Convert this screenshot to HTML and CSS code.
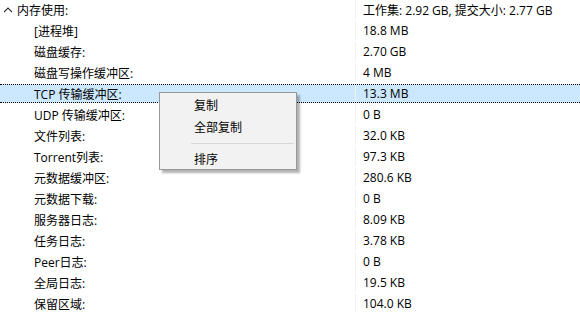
FILE: index.html
```html
<!DOCTYPE html>
<html lang="zh-CN">
<head>
    <meta charset="UTF-8">
    <title>内存使用</title>
    <link rel="stylesheet" href="styles.css">
</head>
<body>

<div class="stats-list">
    <div class="row group-row">
        <div class="name">
            <svg class="chevron" width="10" height="8" viewBox="0 0 10 8"><path d="M1 6 L5 2 L9 6" fill="none" stroke="#333" stroke-width="1.1"/></svg>
            内存使用:
        </div>
        <div class="value">工作集: 2.92 GB, 提交大小: 2.77 GB</div>
    </div>
    <div class="row"><div class="name child">[进程堆]</div><div class="value">18.8 MB</div></div>
    <div class="row"><div class="name child">磁盘缓存:</div><div class="value">2.70 GB</div></div>
    <div class="row"><div class="name child">磁盘写操作缓冲区:</div><div class="value">4 MB</div></div>
    <div class="row selected"><div class="name child">TCP 传输缓冲区:</div><div class="value">13.3 MB</div></div>
    <div class="row"><div class="name child">UDP 传输缓冲区:</div><div class="value">0 B</div></div>
    <div class="row"><div class="name child">文件列表:</div><div class="value">32.0 KB</div></div>
    <div class="row"><div class="name child">Torrent列表:</div><div class="value">97.3 KB</div></div>
    <div class="row"><div class="name child">元数据缓冲区:</div><div class="value">280.6 KB</div></div>
    <div class="row"><div class="name child">元数据下载:</div><div class="value">0 B</div></div>
    <div class="row"><div class="name child">服务器日志:</div><div class="value">8.09 KB</div></div>
    <div class="row"><div class="name child">任务日志:</div><div class="value">3.78 KB</div></div>
    <div class="row"><div class="name child">Peer日志:</div><div class="value">0 B</div></div>
    <div class="row"><div class="name child">全局日志:</div><div class="value">19.5 KB</div></div>
    <div class="row"><div class="name child">保留区域:</div><div class="value">104.0 KB</div></div>
</div>

<div class="context-menu">
    <div class="menu-item">复制</div>
    <div class="menu-item">全部复制</div>
    <div class="menu-sep"></div>
    <div class="menu-item">排序</div>
</div>

</body>
</html>
```

FILE: styles.css
```css
body {
    margin: 0;
    padding: 0;
    background: #fff;
    color: #000;
    font-family: "Open Sans", "Noto Sans CJK SC", sans-serif;
    font-size: 12px;
    width: 580px;
    height: 312px;
    overflow: hidden;
    position: relative;
}
.stats-list {
    display: flex;
    flex-direction: column;
    gap: 2px;
}
.row {
    display: flex;
    height: 19px;
    align-items: center;
    box-sizing: border-box;
}
.row.selected {
    background: #cce8ff;
    border-top: 1px dotted #000;
    border-bottom: 1px dotted #000;
}
.name {
    width: 356px;
    flex: none;
    display: flex;
    align-items: center;
    white-space: nowrap;
    border-right: 1px solid #f0f0f0;
    height: 100%;
    box-sizing: border-box;
}
.group-row .name {
    padding-left: 3px;
}
.chevron {
    margin-right: 4px;
}
.name.child {
    padding-left: 34px;
}
.value {
    padding-left: 7px;
    white-space: nowrap;
}
.context-menu {
    position: absolute;
    left: 159px;
    top: 92px;
    width: 138px;
    padding: 2px 0;
    background: #f2f2f2;
    border: 1px solid #979797;
    box-shadow: 3px 3px 2px rgba(0, 0, 0, 0.3);
    box-sizing: border-box;
    height: 78px;
}
.menu-item {
    height: 22px;
    line-height: 22px;
    padding-left: 34px;
}
.menu-sep {
    height: 1px;
    background: #d7d7d7;
    margin: 4px 2px 5px 31px;
}
```
